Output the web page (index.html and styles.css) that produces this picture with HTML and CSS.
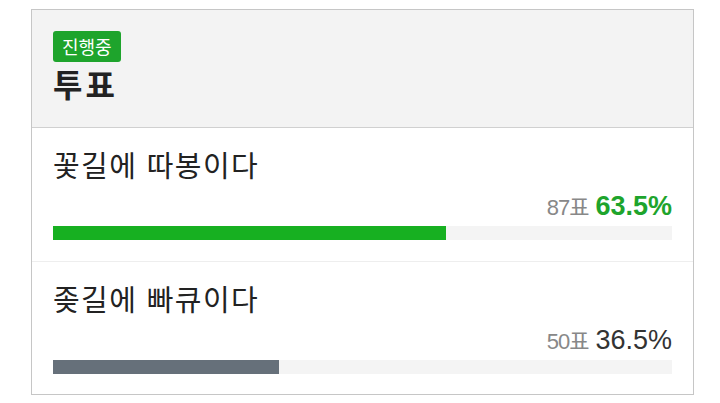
FILE: index.html
```html
<!DOCTYPE html>
<html lang="ko">
<head>
    <meta charset="UTF-8">
    <meta name="viewport" content="width=device-width, initial-scale=1.0">
    <title>투표</title>
<link rel="stylesheet" href="styles.css">
</head>
<body>
    <div class="poll">
        <div class="poll-head">
            <span class="badge">진행중</span>
            <h2 class="poll-title">투표</h2>
        </div>
        <div class="option">
            <div class="option-name">꽃길에 따봉이다</div>
            <div class="option-result">
                <span class="count">87표</span>
                <span class="rate win">63.5%</span>
            </div>
            <div class="track"><div class="fill win" style="width: 63.5%"></div></div>
        </div>
        <div class="option">
            <div class="option-name">좆길에 빠큐이다</div>
            <div class="option-result">
                <span class="count">50표</span>
                <span class="rate">36.5%</span>
            </div>
            <div class="track"><div class="fill" style="width: 36.5%"></div></div>
        </div>
    </div>
</body>
</html>
```

FILE: styles.css
```css
*{
    padding: 0;
    margin: 0;
    box-sizing: border-box;
}
body{
    background: #fff;
    font-family: "Noto Sans CJK KR", "Noto Sans", sans-serif;
    color: #222;
}
.poll{
    margin: 9px 0 0 31px;
    width: 663px;
    border: 1px solid #c6c6c6;
}
.poll-head{
    height: 118px;
    padding: 21px 21px 0;
    background: #f3f3f3;
    border-bottom: 1px solid #d0d0d0;
}
.badge{
    display: inline-block;
    height: 31px;
    padding: 0 9px;
    line-height: 30px;
    font-size: 18px;
    color: #fff;
    background: #1ea42c;
    border-radius: 3px;
}
.poll-title{
    margin-top: 2px;
    font-size: 32px;
    font-weight: 700;
    letter-spacing: 3px;
    line-height: 38px;
    color: #222;
}
.option{
    padding: 18px 21px 21px;
    border-bottom: 1px solid #eee;
}
.option:last-child{
    padding-bottom: 20px;
    border-bottom: none;
}
.option-name{
    font-size: 29px;
    letter-spacing: 1.4px;
    line-height: 36px;
    color: #222;
}
.option-result{
    display: flex;
    justify-content: flex-end;
    align-items: baseline;
    gap: 7px;
    height: 34px;
    margin-top: 7px;
    font-family: "Liberation Sans", "Noto Sans CJK KR", sans-serif;
    line-height: 34px;
}
.count{
    font-size: 22px;
    letter-spacing: -1px;
    color: #888;
}
.rate{
    font-size: 27px;
    color: #333;
}
.rate.win{
    font-weight: 700;
    color: #1ea42c;
}
.track{
    margin-top: 3px;
    height: 14px;
    background: #f4f4f4;
}
.fill{
    height: 100%;
    background: #66707a;
}
.fill.win{
    background: #17b021;
}
```
